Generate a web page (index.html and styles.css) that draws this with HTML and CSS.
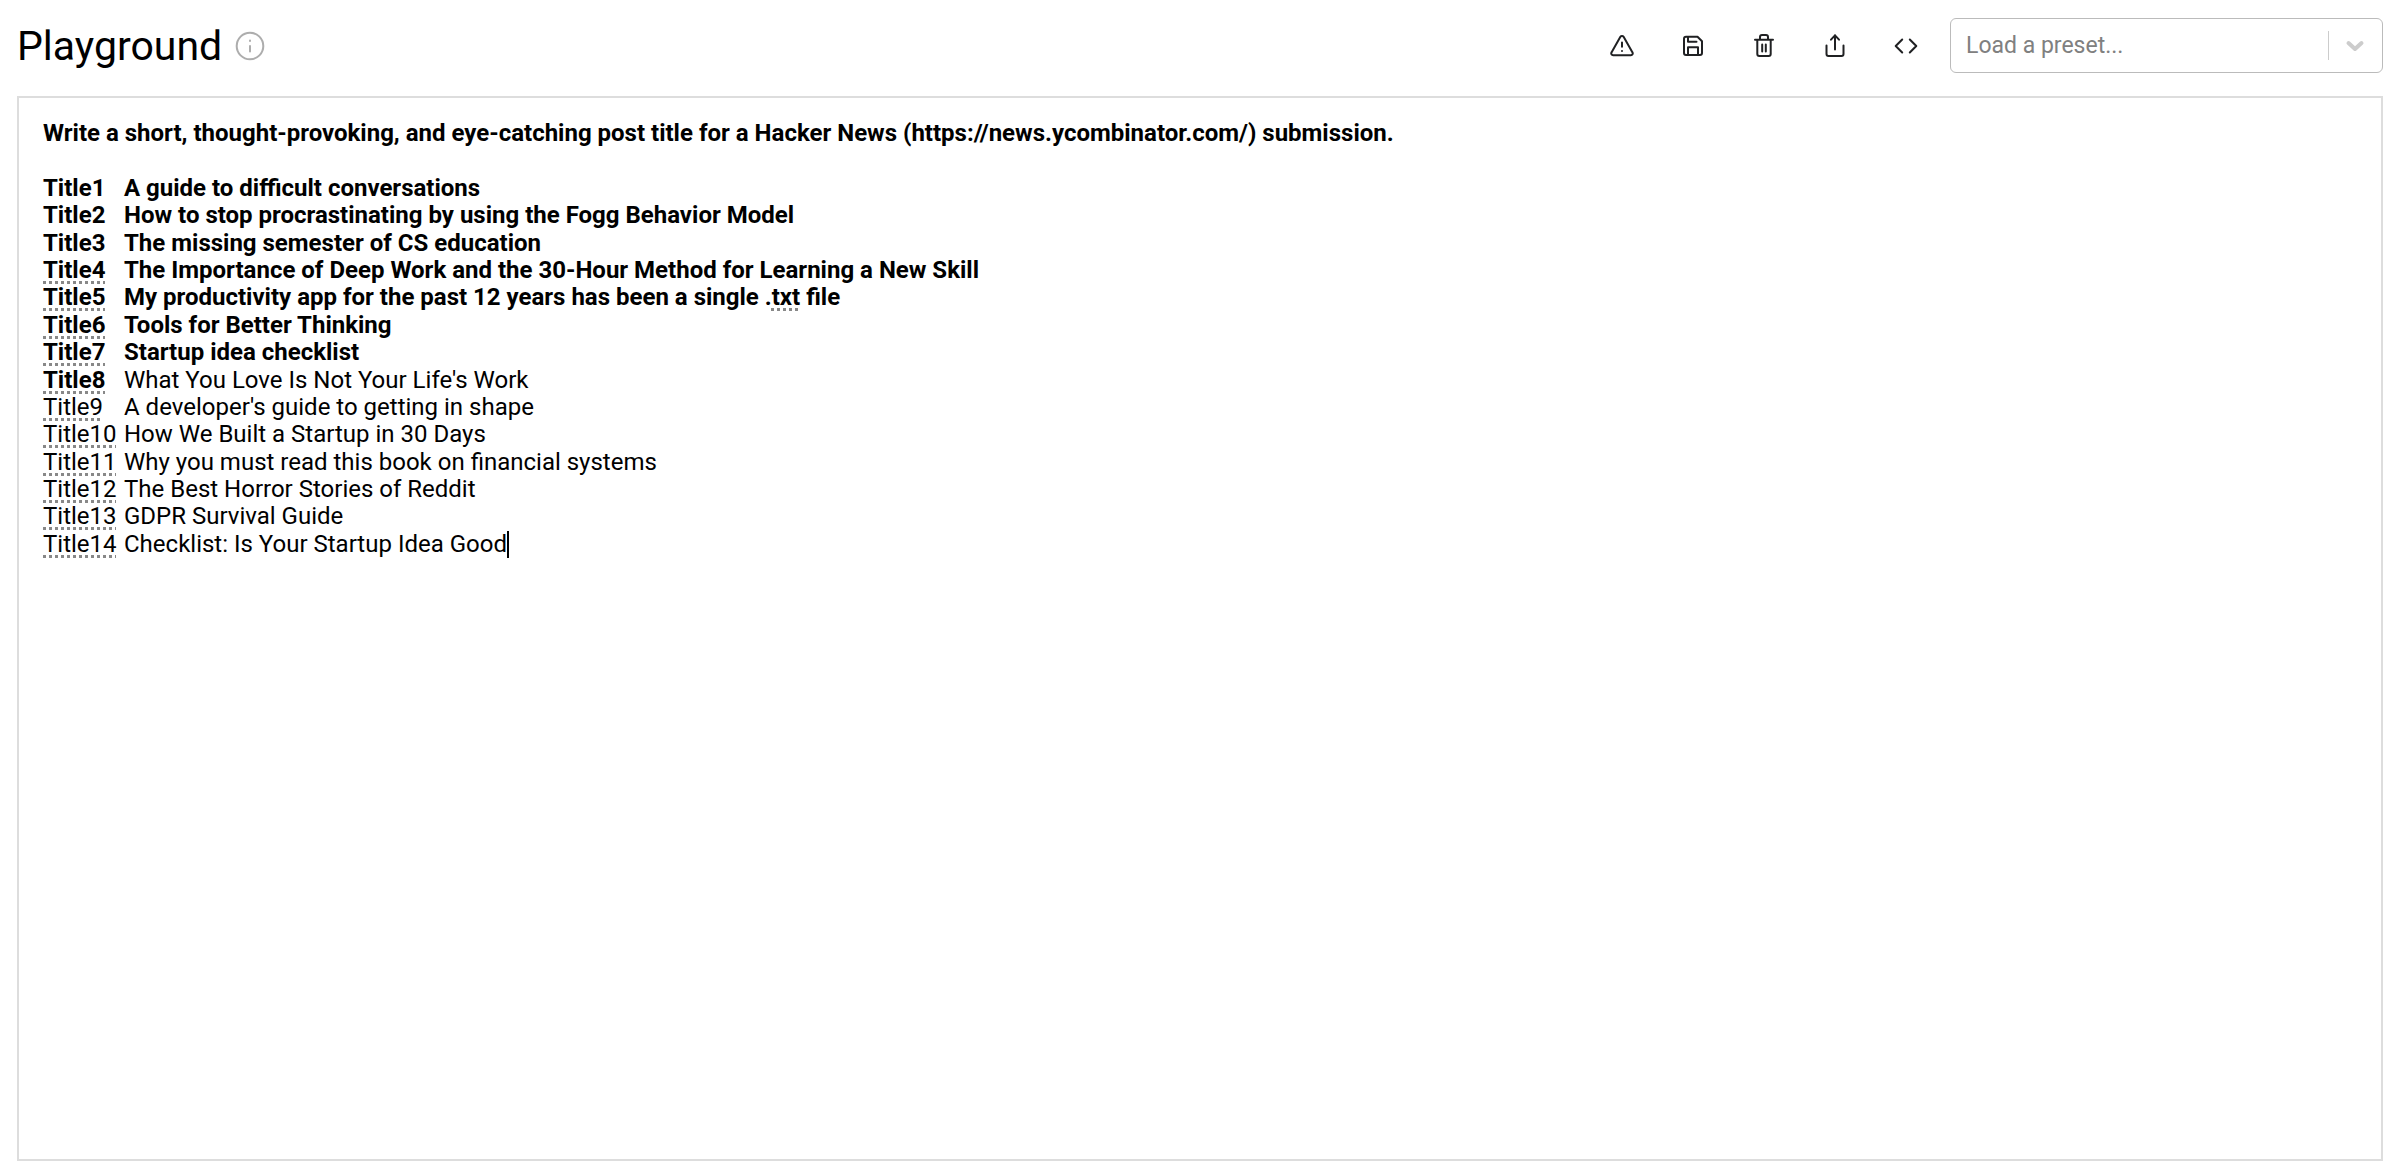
FILE: index.html
```html
<!DOCTYPE html>
<html lang="en">
  <head>
    <meta charset="UTF-8" />
    <meta name="viewport" content="width=device-width, initial-scale=1.0" />
    <title>Playground</title>
    <link rel="stylesheet" href="styles.css" />
  </head>
  <body>
    <header class="header">
      <h1>Playground</h1>
      <button class="icon-button info" type="button" aria-label="About the playground">
        <svg width="30" height="30" viewBox="0 0 30 30">
          <circle cx="15" cy="15" r="13.300" />
          <path d="M15 15v5.500M15 9.500v.4" />
        </svg>
      </button>
      <div class="actions">
        <button class="icon-button" type="button" aria-label="Content warnings">
          <svg width="28" height="28" viewBox="0 0 28 28">
            <path d="M12.4 4.800 3.500 20.400a1.9 1.9 0 0 0 1.6 2.9h17.800a1.9 1.9 0 0 0 1.6-2.900L15.6 4.800a1.9 1.9 0 0 0-3.2 0zM14 10.500v4.300M14 18.900v.2" />
          </svg>
        </button>
        <button class="icon-button" type="button" aria-label="Save">
          <svg width="28" height="28" viewBox="0 0 28 28">
            <path d="M7 4.700h11.500L23 9.200V21a2 2 0 0 1-2 2H7a2 2 0 0 1-2-2V6.700a2 2 0 0 1 2-2zM9 5v4.800h8.500M9 23v-7.800h10V23" />
          </svg>
        </button>
        <button class="icon-button" type="button" aria-label="Delete">
          <svg width="28" height="28" viewBox="0 0 28 28">
            <path d="M5 7.700h18M10 7.700V5a2 2 0 0 1 2-2h4a2 2 0 0 1 2 2v2.700M7.300 7.700V22a2 2 0 0 0 2 2h9.400a2 2 0 0 0 2-2V7.700M12.200 12.500v7M15.800 12.500v7" />
          </svg>
        </button>
        <button class="icon-button" type="button" aria-label="Share">
          <svg width="28" height="28" viewBox="0 0 28 28">
            <path d="M5.500 13.500V22a2 2 0 0 0 2 2h13a2 2 0 0 0 2-2v-8.500M14 17.500V3.300M10 7.700l4-4.400 4 4.400" />
          </svg>
        </button>
        <button class="icon-button" type="button" aria-label="View code">
          <svg width="28" height="28" viewBox="0 0 28 28">
            <path d="M10.200 7.500 3.700 14l6.500 6.500M17.800 7.500l6.500 6.500-6.500 6.500" />
          </svg>
        </button>
      </div>
      <div class="preset">
        <select aria-label="Load a preset">
          <option>Load a preset...</option>
        </select>
        <span class="preset-indicator">
          <svg width="20" height="14" viewBox="0 0 20 14">
            <path d="M3.500 4 10 10l6.500-6" />
          </svg>
        </span>
      </div>
    </header>

    <main class="editor">
      <div class="prompt" contenteditable="true" spellcheck="false" role="textbox" aria-multiline="true" aria-label="Prompt">
        <p><b>Write a short, thought-provoking, and eye-catching post title for a Hacker News (https://news.ycombinator.com/) submission.</b></p>
        <p><br /></p>
        <p><b>Title1&#9;A guide to difficult conversations</b></p>
        <p><b>Title2&#9;How to stop procrastinating by using the Fogg Behavior Model</b></p>
        <p><b>Title3&#9;The missing semester of CS education</b></p>
        <p><b><u>Title4</u>&#9;The Importance of Deep Work and the 30-Hour Method for Learning a New Skill</b></p>
        <p><b><u>Title5</u>&#9;My productivity app for the past 12 years has been a single .<u>txt</u> file</b></p>
        <p><b><u>Title6</u>&#9;Tools for Better Thinking</b></p>
        <p><b><u>Title7</u>&#9;Startup idea checklist</b></p>
        <p><b><u>Title8</u></b>&#9;What You Love Is Not Your Life's Work</p>
        <p><u>Title9</u>&#9;A developer's guide to getting in shape</p>
        <p><u>Title10</u>&#9;How We Built a Startup in 30 Days</p>
        <p><u>Title11</u>&#9;Why you must read this book on financial systems</p>
        <p><u>Title12</u>&#9;The Best Horror Stories of Reddit</p>
        <p><u>Title13</u>&#9;GDPR Survival Guide</p>
        <p><u>Title14</u>&#9;Checklist: Is Your Startup Idea Good<span class="caret"></span></p>
      </div>
    </main>
  </body>
</html>
```
FILE: styles.css
```css
* {
  box-sizing: border-box;
}

body {
  margin: 0;
  padding: 18px 17px 15px;
  min-height: 100vh;
  display: flex;
  flex-direction: column;
  background-color: #fff;
  color: #000;
  font-family: Roboto, "Liberation Sans", sans-serif;
  font-size: 24px;
}

.header {
  display: flex;
  align-items: center;
  height: 55px;
  margin-bottom: 23px;
}

h1 {
  margin: 0 12px 0 0;
  font-size: 41px;
  line-height: 48px;
  font-weight: 400;
}

.icon-button {
  display: flex;
  align-items: center;
  justify-content: center;
  width: 32px;
  height: 32px;
  padding: 0;
  border: none;
  background: none;
  color: #202123;
  cursor: pointer;
}

.icon-button:hover {
  color: #6e6e80;
}

svg {
  fill: none;
  stroke: currentColor;
  stroke-width: 2;
  stroke-linecap: round;
  stroke-linejoin: round;
}

.info {
  color: #adadad;
}

.actions {
  display: flex;
  gap: 39px;
  margin-left: auto;
  margin-right: 28px;
}

.preset {
  position: relative;
  width: 433px;
}

.preset select {
  appearance: none;
  display: block;
  width: 100%;
  height: 55px;
  padding: 0 72px 0 15px;
  border: 1px solid #bbb;
  border-radius: 6px;
  background-color: #fff;
  color: #808080;
  font-family: inherit;
  font-size: 23px;
}

/* divider and arrow over the right end of the select */
.preset-indicator {
  position: absolute;
  top: 13px;
  right: 18px;
  display: flex;
  align-items: center;
  height: 29px;
  padding-left: 16px;
  border-left: 1px solid #ccc;
  color: #ccc;
  pointer-events: none;
}

.preset-indicator svg {
  stroke-width: 4;
}

.editor {
  flex: 1;
  padding: 22px 24px;
  border: 2px solid #ddd;
}

.prompt {
  display: flex;
  flex-direction: column;
  justify-content: space-between;
  min-height: 438px;
  line-height: 27px;
  outline: none;
}

.prompt p {
  margin: 0;
  white-space: pre-wrap;
  tab-size: 81px;
}

/* spell check marks */
.prompt u {
  text-decoration: underline dotted #888 3px;
  text-decoration-skip-ink: none;
  text-underline-offset: 3px;
}

.caret {
  display: inline-block;
  width: 2px;
  height: 27px;
  background-color: #000;
  vertical-align: top;
}
```
